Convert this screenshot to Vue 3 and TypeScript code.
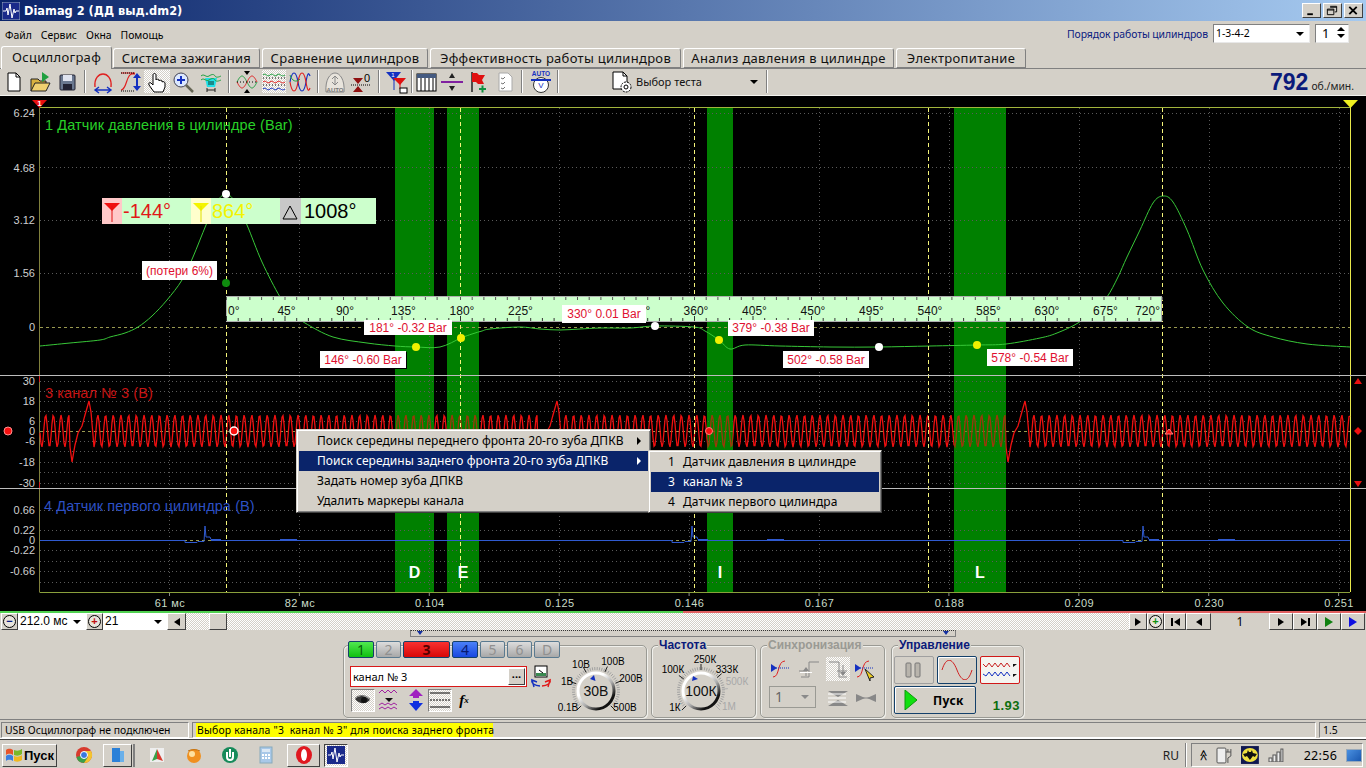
<template>
  <div class="app">
    <header class="title-bar">
      <svg class="app-icon" viewBox="0 0 18 18"><rect width="18" height="18" fill="#1a2a8a" stroke="#9ab" /><path d="M1 9h3l1-3 1 7 2-11 2 14 2-9 1 4 1-2h3" fill="none" stroke="#fff" /></svg>
      <span class="title-text">Diamag 2 (ДД выд.dm2)</span>
      <div class="win-btns">
        <button class="win-btn"><svg viewBox="0 0 16 14"><rect x="4" y="10" width="6" height="2" /></svg></button>
        <button class="win-btn"><svg viewBox="0 0 16 14"><path d="M6 2.5h7v6h-2M3 5.5h7v6H3z M3 6.5h7M6 3.5h7" fill="none" stroke="#000" /></svg></button>
        <button class="win-btn"><svg viewBox="0 0 16 14"><path d="M4 3l8 8M12 3l-8 8" stroke="#000" stroke-width="2" /></svg></button>
      </div>
    </header>

    <div class="menu-row">
      <nav class="menu-bar">
        <span v-for="m in menus" :key="m">{{ m }}</span>
      </nav>
      <span class="order-label">Порядок работы цилиндров</span>
      <div class="combo order-combo">1-3-4-2<i class="arr"></i></div>
      <div class="combo spin">1<span class="spin-arrows"><i class="up"></i><i class="arr"></i></span></div>
    </div>

    <div class="tabs">
      <div v-for="t in tabs" :key="t.name" class="tab" :class="{ active: t.active }" :style="{ width: t.w + 'px' }">{{ t.name }}</div>
    </div>

    <div class="toolbar">
      <template v-for="(it, i) in toolbar" :key="i">
        <span v-if="it.sep" class="tb-sep" :style="{ width: it.w + 'px' }"></span>
        <span v-else class="tb-btn" :class="{ pressed: it.on }" :style="{ width: it.w + 'px' }">
          <svg viewBox="0 0 24 24" width="24" height="24" v-html="it.svg"></svg>
        </span>
      </template>
      <div class="test-select">
        <svg viewBox="0 0 24 24" width="24" height="24"><path d="M3 2h10l4 4v13H3z" fill="#fff" stroke="#000" /><path d="M13 2v4h4" fill="none" stroke="#000" /><circle cx="16" cy="17" r="5" fill="#fff" stroke="#000" stroke-dasharray="2 1" /><circle cx="16" cy="17" r="2" fill="none" stroke="#000" /></svg>
        <span>Выбор теста</span>
        <i class="arr"></i>
      </div>
      <span class="tb-sep" style="width: 2px"></span>
      <div class="rpm"><b>792</b><span>об./мин.</span></div>
    </div>

    <main class="scope">
      <svg class="plot" viewBox="0 96 1366 517" width="1366" height="517">
        <rect x="0" y="96" width="1366" height="517" fill="#000" />
        <rect v-for="b in bands" :key="b.l" :x="b.x" y="107" :width="b.w" height="485" fill="#008000" />

        <line v-for="y in gridY" :key="'h' + y" x1="40" x2="1350" :y1="y" :y2="y" stroke="#5a5a5a" stroke-dasharray="1 3" />
        <line v-for="x in gridX" :key="'v' + x" :x1="x" :x2="x" y1="108" y2="592" stroke="#5a5a5a" stroke-dasharray="1 3" />
        <line v-for="y in zeroY" :key="'z' + y" x1="40" x2="1350" :y1="y" :y2="y" stroke="#9a9a50" stroke-dasharray="3 3" />

        <line x1="39.5" x2="1350" y1="107.5" y2="107.5" stroke="#a3b53c" />
        <line x1="39.5" x2="39.5" y1="107" y2="592" stroke="#80803c" />
        <line x1="39.5" x2="1350" y1="592.5" y2="592.5" stroke="#8aa03c" />
        <line x1="39.5" x2="39.5" y1="376" y2="382" stroke="#d02020" />
        <line x1="39.5" x2="39.5" y1="482" y2="488" stroke="#d02020" />
        <line x1="1350.5" x2="1350.5" y1="107" y2="592" stroke="#e8e84a" />

        <path :d="ch3Path" fill="none" stroke="#f01010" stroke-width="1.3" />
        <rect v-for="b in bands" :key="'d' + b.l" :x="b.x" y="408" :width="b.w" height="50" fill="#008000" opacity="0.35" />
        <path :d="ch4Path" fill="none" stroke="#2f5ad0" />
        <path :d="ch4Thick" fill="none" stroke="#2f5ad0" stroke-width="2" />
        <path :d="ch1Path" fill="none" stroke="#38c838" />

        <line v-for="x in cursors" :key="'c' + x" :x1="x" :x2="x" y1="108" y2="592" stroke="#f4f47a" stroke-dasharray="4 3" />

        <line x1="0" x2="1366" y1="375.5" y2="375.5" stroke="#bdbdbd" />
        <line x1="0" x2="1366" y1="488.5" y2="488.5" stroke="#bdbdbd" />

        <text v-for="a in axisY" :key="a.t + a.y" class="axis-text" x="35" :y="a.y + 4" text-anchor="end">{{ a.t }}</text>
        <text v-for="a in axisX" :key="a.t" class="axis-x" :x="a.x" y="607" text-anchor="middle">{{ a.t }}</text>
        <line v-for="a in axisX" :key="'t' + a.t" :x1="a.x - 0.5" :x2="a.x - 0.5" y1="593" y2="596" stroke="#888" />
        <text v-for="b in bands" :key="'t' + b.l" class="band-letter" :x="b.x + b.w / 2" y="578" text-anchor="middle">{{ b.l }}</text>

        <text class="ch-name" x="45" y="130" fill="#28d028">1 Датчик давления в цилиндре (Bar)</text>
        <text class="ch-name" x="45" y="398" fill="#c81414">3 канал № 3 (В)</text>
        <text class="ch-name" x="44" y="511" fill="#2d50c4">4 Датчик первого цилиндра (В)</text>

        <rect x="226.5" y="296.5" width="935" height="25" fill="#ccffcc" stroke="#b0b0b0" />
        <line v-for="t in rulerTicks" :key="'r' + t.x" :x1="t.x" :x2="t.x" y1="297" y2="300" stroke="#555" />
        <line v-for="t in rulerTicks" :key="'b' + t.x" :x1="t.x" :x2="t.x" :y1="t.major ? 316 : 318" y2="321" stroke="#333" />
        <text v-for="r in rulerLabels" :key="r.t" class="ruler-text" :x="r.x" y="315" :text-anchor="r.anchor">{{ r.t }}</text>

        <circle v-for="d in dots" :key="d.x" :cx="d.x" :cy="d.y" r="4" :fill="d.c" />

        <path d="M32 100h15l-7.500 8z" fill="#e81010" />
        <text class="marker-no" x="39.500" y="106" text-anchor="middle">1</text>
        <path d="M1343 100h15l-7.500 8z" fill="#f0f020" />

        <circle cx="8" cy="431" r="4" fill="#f81010" stroke="#ff9090" />
        <circle cx="234" cy="431" r="4" fill="#f81010" stroke="#fff" stroke-width="1.500" />
        <circle cx="709" cy="431" r="3.500" fill="#f81010" stroke="#ff8080" />
        <path d="M1165 434l4-5 4 5z" fill="#f81010" stroke="#ff8080" />
        <path d="M1354 384l4-6 4 6z" fill="#e81010" />
        <path d="M1358 427l4 4-4 4-4-4z" fill="#f01010" />
        <path d="M1354 481h8l-4 6z" fill="#e81010" />
      </svg>

      <div class="readout">
        <span class="ro-flag red"><svg viewBox="0 0 20 26" width="20" height="26"><path d="M2 5h16l-8 8z" fill="#f01010" /><line x1="10" x2="10" y1="8" y2="24" stroke="#e01010" /></svg></span>
        <span class="ro-val red">-144°</span>
        <span class="ro-flag yellow"><svg viewBox="0 0 20 26" width="20" height="26"><path d="M2 5h16l-8 8z" fill="#f4f400" /><line x1="10" x2="10" y1="8" y2="24" stroke="#e0e000" /></svg></span>
        <span class="ro-val yellow">864°</span>
        <span class="ro-flag gray"><svg viewBox="0 0 20 26" width="20" height="26"><path d="M3 21h14L10 8z" fill="none" stroke="#000" /></svg></span>
        <span class="ro-val last">1008°</span>
      </div>

      <div
        v-for="l in labels"
        :key="l.t"
        class="val-label"
        :class="{ shadow: l.shadow }"
        :style="{ left: l.x + 'px', top: l.y - 96 + 'px', width: l.w + 'px', height: l.h + 'px' }"
      >{{ l.t }}</div>

      <ul class="ctx-menu">
        <li v-for="m in ctxItems" :key="m.t" :class="{ sel: m.sel }">{{ m.t }}<i v-if="m.sub" class="sub-arr"></i></li>
      </ul>
      <ul class="ctx-menu sub">
        <li v-for="m in subItems" :key="m.n" :class="{ sel: m.sel }"><span class="sub-n">{{ m.n }}</span>{{ m.t }}</li>
      </ul>
    </main>

    <div class="nav-row">
      <button class="rnd-btn"><span class="rnd">−</span></button>
      <div class="nav-combo w68">212.0 мс<i class="arr"></i></div>
      <button class="rnd-btn"><span class="rnd plus-red">+</span></button>
      <div class="nav-combo w64">21<i class="arr"></i></div>
      <button class="nav-btn w19"><i class="tri-l"></i></button>
      <div class="track"><span class="thumb"></span></div>
      <button class="nav-btn w18"><i class="tri-r"></i></button>
      <button class="rnd-btn"><span class="rnd plus-green">+</span></button>
      <button class="nav-btn w22"><i class="bar"></i><i class="tri-l"></i></button>
      <button class="nav-btn w25"><i class="tri-l"></i></button>
      <span class="page-no">1</span>
      <button class="nav-btn w24"><i class="tri-r"></i></button>
      <button class="nav-btn w24"><i class="tri-r"></i><i class="bar"></i></button>
      <button class="nav-btn w24"><i class="tri-r green"></i></button>
      <button class="nav-btn w24"><i class="tri-r blue"></i></button>
    </div>

    <div class="slider-row">
      <div class="slider"><i class="s-mark"></i><i class="s-mark"></i></div>
    </div>

    <section class="controls">
      <div class="group g-channels">
        <div class="g-left">
          <div class="ch-btns">
            <span v-for="c in channels" :key="c.t" class="ch-btn" :class="c.cls" :style="{ width: c.w + 'px' }">{{ c.t }}</span>
          </div>
          <div class="ch-input-row">
            <div class="ch-input">канал № 3<span class="dots-btn">...</span></div>
            <svg viewBox="0 0 20 24" width="20" height="24"><rect x="4" y="1" width="12" height="11" fill="#fff" stroke="#000" /><rect x="5" y="8" width="10" height="3" fill="#3a8a50" /><path d="M8 5l4 3" stroke="#000" /><path d="M1 15a9 5 0 0 0 8 6M3 22l-2-7 5 2" fill="none" stroke="#1430c0" stroke-width="1.400" /><path d="M19 15a9 5 0 0 1-8 6M17 22l2-7-5 2" fill="none" stroke="#e01818" stroke-width="1.400" /></svg>
          </div>
          <div class="ch-tools">
            <span class="tool pressed w24"><svg viewBox="0 0 22 22" width="22" height="22"><path d="M3 10c4-4 10-4 15 1-4 4-10 5-15-1z" fill="#333" /><circle cx="12" cy="11" r="3" fill="#111" /><path d="M3 9c5-4 11-3 15 1" fill="none" stroke="#777" /></svg></span>
            <span class="tool w28"><svg viewBox="0 0 22 22" width="22" height="22"><path d="M1 4l3-3 3 3 3-3 3 3 3-3 3 3" fill="none" stroke="#a020a0" /><path d="M7 9h8l-4 4z" fill="#111" /><path d="M1 16l3-2 3 2 3-2 3 2 3-2 3 2M1 20l3-2 3 2 3-2 3 2 3-2 3 2" fill="none" stroke="#a020a0" /></svg></span>
            <span class="tool w25"><svg viewBox="0 0 22 22" width="22" height="22"><path d="M11 0l7 7h-4v2H8V7H4z" fill="#a020c0" /><path d="M11 22l7-8h-4v-2H8v2H4z" fill="#1030e0" /></svg></span>
            <span class="tool pressed w24"><svg viewBox="0 0 22 22" width="22" height="22"><path d="M1 4h20M1 18h20" stroke="#000" /><path d="M1 11h20" stroke="#000" stroke-dasharray="2 1" /></svg></span>
            <span class="tool w24 fx">f<sub>x</sub></span>
          </div>
        </div>
        <svg class="knob-svg" viewBox="558 646 88 71" width="88" height="71">
          <g v-for="k in [knobs[0]]" :key="k.c">
            <line v-for="(t, i) in k.ticks" :key="i" :x1="t.x1" :y1="t.y1" :x2="t.x2" :y2="t.y2" :stroke="t.c" />
            <circle :cx="k.x" :cy="k.y" r="18" fill="#d4d0c8" stroke="url(#ring)" stroke-width="3" />
            <path :d="`M${k.x - 6} ${k.y - 12}l4 -4l1.500 6z`" fill="#1430c0" />
            <text class="knob-c" :x="k.x" :y="k.y + 5" text-anchor="middle">{{ k.c }}</text>
            <text v-for="l in k.labels" :key="l.t" class="knob-l" :x="l.x" :y="l.y + 3" text-anchor="middle" :fill="l.off ? '#a8a8a8' : '#000'">{{ l.t }}</text>
          </g>
          <defs>
            <linearGradient id="ring" x1="0.150" y1="0.100" x2="0.850" y2="0.900"><stop offset="0.300" stop-color="#fff" /><stop offset="0.600" stop-color="#aaa" /><stop offset="0.900" stop-color="#111" /></linearGradient>
          </defs>
        </svg>
      </div>

      <div class="group g-freq">
        <span class="g-title">Частота</span>
        <svg class="knob-svg" viewBox="652 646 102 71" width="102" height="71">
          <g v-for="k in [knobs[1]]" :key="k.c">
            <line v-for="(t, i) in k.ticks" :key="i" :x1="t.x1" :y1="t.y1" :x2="t.x2" :y2="t.y2" :stroke="t.c" />
            <circle :cx="k.x" :cy="k.y" r="18" fill="#d4d0c8" stroke="url(#ring)" stroke-width="3" />
            <path :d="`M${k.x - 9} ${k.y - 10}l1 -5l5 3z`" fill="#1430c0" />
            <text class="knob-c" :x="k.x" :y="k.y + 5" text-anchor="middle">{{ k.c }}</text>
            <text v-for="l in k.labels" :key="l.t" class="knob-l" :x="l.x" :y="l.y + 3" text-anchor="middle" :fill="l.off ? '#a8a8a8' : '#000'">{{ l.t }}</text>
          </g>
        </svg>
      </div>

      <div class="group g-sync">
        <span class="g-title off">Синхронизация</span>
        <div class="sync-grid">
          <span class="sync-cell"><svg viewBox="0 0 24 24" width="24" height="24"><path d="M3 20c7 0 4-16 12-16" fill="none" stroke="#e02020" /><path d="M6 11h14" stroke="#1430c0" stroke-dasharray="1 1" /><path d="M1 7l6 4-6 4z" fill="#1430c0" /></svg></span>
          <span class="sync-cell"><svg viewBox="0 0 24 24" width="24" height="24"><path d="M3 20h8V5h10M1 14h6" fill="none" stroke="#888" /><path d="M8 10l-3 4h6z" fill="#888" /><path d="M8 14v5" stroke="#888" /><path d="M2 15.500h12" stroke="#fff" /></svg></span>
          <span class="sync-cell pressed"><svg viewBox="0 0 24 24" width="24" height="24"><path d="M3 5h10v15h8M11 14h10" fill="none" stroke="#888" /><path d="M17 19l-3-4h6z" fill="#888" /><path d="M17 8v7" stroke="#888" /></svg></span>
          <span class="sync-cell"><svg viewBox="0 0 24 24" width="24" height="24"><path d="M3 20c7 0 4-16 12-16" fill="none" stroke="#e02020" /><path d="M6 11h14" stroke="#1430c0" stroke-dasharray="1 1" /><path d="M1 7l6 4-6 4z" fill="#1430c0" /><path d="M11 12l9 8-4 1 0 3z" fill="#f0d020" stroke="#222" /></svg></span>
          <div class="sync-combo">1<i class="arr off"></i></div>
          <span class="sync-cell"><svg viewBox="0 0 24 24" width="24" height="24"><path d="M2 5h20l-10 6zM2 20h20L12 14z" fill="#888" /><path d="M2 8h18M2 12h18M2 16h18" stroke="#fff" /></svg></span>
          <span class="sync-cell"><svg viewBox="0 0 24 24" width="24" height="24"><path d="M2 8l9 4-9 4zM22 8l-9 4 9 4z" fill="#888" /><path d="M2 12h20" stroke="#888" /></svg></span>
        </div>
      </div>

      <div class="group g-run">
        <span class="g-title">Управление</span>
        <div class="run-top">
          <button class="run-btn"><svg viewBox="0 0 22 20" width="22" height="20"><rect x="3" y="3" width="5" height="14" rx="1" fill="#b8b4ac" stroke="#777" /><rect x="12" y="3" width="5" height="14" rx="1" fill="#b8b4ac" stroke="#777" /></svg></button>
          <button class="run-btn navy"><svg viewBox="0 0 34 20" width="34" height="20"><path d="M2 10C6 -3 12 -3 17 10s11 13 15 0" fill="none" stroke="#d02020" /></svg></button>
          <button class="run-btn red-b"><svg viewBox="0 0 36 22" width="36" height="22"><path d="M1 5l3 3 3-4 3 4 3-4 3 4 3-4 3 4 3-4 3 4" fill="none" stroke="#c82020" /><path d="M31 5h4l-4 3z" fill="#111" /><path d="M1 15l3 2 3-4 3 4 3-4 3 4 3-4 3 4 3-4 3 4" fill="none" stroke="#1430c0" /><path d="M31 15h4l-4 3z" fill="#111" /></svg></button>
        </div>
        <div class="run-bottom">
          <button class="start-btn"><svg viewBox="0 0 14 20" width="14" height="20"><path d="M1 0l12 10L1 20z" fill="#10e010" stroke="#0a9a0a" /></svg><b>Пуск</b></button>
          <span class="ver">1.93</span>
        </div>
      </div>
    </section>

    <footer class="status-bar">
      <div class="st-panel st-usb">USB Осциллограф не подключен</div>
      <div class="st-panel st-msg"><span class="st-yellow">{{ statusMsg }}</span></div>
      <div class="st-panel st-ver">1.5</div>
    </footer>

    <div class="taskbar">
      <button class="start"><svg viewBox="0 0 18 16" width="18" height="16"><path d="M1 3c3-2 5-1 7 0v5C6 7 4 6 1 8z" fill="#e8542a" /><path d="M9 3c3 1 5 1 8-1v5c-3 2-5 2-8 1z" fill="#7ab828" /><path d="M1 9c3-2 5-1 7 0v5c-2-1-4-2-7 0z" fill="#3a7ee0" /><path d="M9 9c3 1 5 1 8-1v5c-3 2-5 2-8 1z" fill="#f0b820" /></svg>Пуск</button>
      <span class="tk-ic" style="margin-left: 18px"><svg viewBox="0 0 18 18" width="18" height="18"><circle cx="9" cy="9" r="8" fill="#d83a2e" /><path d="M9 9L1.500 11A8 8 0 0 0 9 17l4-5z" fill="#3aa04a" /><path d="M9 5h7a8 8 0 0 1-7 12l4-6z" fill="#f4c430" /><circle cx="9" cy="9" r="3.500" fill="#3878e0" stroke="#fff" /></svg></span>
      <span class="tk-btn w29"><svg viewBox="0 0 18 18" width="18" height="18"><path d="M3 2h8v14H3z" fill="#2a80d8" /><path d="M11 5h4v11h-4z" fill="#6ab0ea" /></svg></span>
      <span class="tk-sep"></span>
      <span class="tk-ic" style="margin-left: 13px"><svg viewBox="0 0 18 18" width="18" height="18"><path d="M2 2h14v14H2z" fill="#eee" /><path d="M9 3L4 15l5-2z" fill="#3aa04a" /><path d="M9 3l6 12-6-2z" fill="#d83a2e" /></svg></span>
      <span class="tk-ic" style="margin-left: 19px"><svg viewBox="0 0 18 18" width="18" height="18"><circle cx="9" cy="10" r="7" fill="#f09020" /><circle cx="7" cy="8" r="3" fill="#fde0a0" /><path d="M3 5a8 4 0 0 1 12 0" fill="none" stroke="#c07010" /></svg></span>
      <span class="tk-ic" style="margin-left: 18px"><svg viewBox="0 0 18 18" width="18" height="18"><circle cx="9" cy="9" r="8" fill="#168a5a" /><path d="M5 6v5a4 4 0 0 0 8 0V6h-2v5a2 2 0 0 1-4 0V6z" fill="#fff" /><path d="M9 3v8" stroke="#fff" stroke-width="2" /></svg></span>
      <span class="tk-ic" style="margin-left: 18px"><svg viewBox="0 0 18 18" width="18" height="18"><rect x="3" y="1" width="12" height="16" fill="#a8c8e8" stroke="#8ab" /><rect x="5" y="3" width="8" height="3" fill="#dbe8f4" /><path d="M5 9h2M8 9h2M11 9h2M5 12h2M8 12h2M11 12h2" stroke="#fff" stroke-width="2" /></svg></span>
      <span class="tk-btn w33" style="margin-left: 12px"><svg viewBox="0 0 18 18" width="18" height="18"><ellipse cx="9" cy="9" rx="8" ry="9" fill="#e01820" /><ellipse cx="9" cy="9" rx="3" ry="6" fill="#fff" /></svg></span>
      <span class="tk-btn tk-active w24"><svg viewBox="0 0 18 18" width="18" height="18"><rect width="18" height="18" fill="#1a2a8a" /><path d="M1 9h3l1-3 1 7 2-11 2 14 2-9 1 4 1-2h3" fill="none" stroke="#fff" /></svg></span>
      <span class="tk-lang">RU</span>
      <span class="tk-div"></span>
      <div class="tray">
        <span class="tray-up">≫</span>
        <svg viewBox="0 0 20 20" width="20" height="20"><rect x="2" y="3" width="9" height="15" rx="1" fill="#eee" stroke="#555" /><path d="M11 7h5v4l-3 2v5M13 4v3M16 4v3" fill="none" stroke="#555" /></svg>
        <svg viewBox="0 0 18 18" width="18" height="18"><rect width="18" height="18" fill="#101850" /><ellipse cx="9" cy="9" rx="8" ry="7" fill="#f0e040" /><path d="M2 8l4-1 1-3 1 2h2l1-2 1 3 4 1-2 3-2-1-3 4-3-4-2 1z" fill="#111" /></svg>
        <svg class="tray-sig" viewBox="0 0 16 14" width="16" height="14"><rect x="1" y="10" width="3" height="4" fill="#eee" stroke="#555" /><rect x="5" y="7" width="3" height="7" fill="#eee" stroke="#555" /><rect x="9" y="4" width="3" height="10" fill="#eee" stroke="#555" /><rect x="13" y="1" width="2" height="13" fill="#eee" stroke="#555" /></svg>
        <span class="clock">22:56</span>
        <span class="desk"></span>
      </div>
    </div>
  </div>
</template>

<script setup lang="ts">
type Pt = [number, number]

const menus = ['Файл', 'Сервис', 'Окна', 'Помощь']
const statusMsg = 'Выбор канала "3  канал № 3" для поиска заднего фронта'

const tabs = [
  { name: 'Осциллограф', w: 111, active: true },
  { name: 'Система зажигания', w: 147 },
  { name: 'Сравнение цилиндров', w: 166 },
  { name: 'Эффективность работы цилиндров', w: 251 },
  { name: 'Анализ давления в цилиндре', w: 211 },
  { name: 'Электропитание', w: 130 },
]

const toolbar = [
  { w: 26, svg: '<path d="M6 3h8l4 4v14H6z" fill="#fff" stroke="#000"/><path d="M14 3v4h4" fill="none" stroke="#000"/>' },
  { w: 26, svg: '<path d="M3 21V9h7l2 2h6v2" fill="#d8b040" stroke="#222"/><path d="M3 21l4-8h15l-4 8z" fill="#f0d070" stroke="#222"/><path d="M14 2l7 5-7 5z" fill="#20a040"/>' },
  { w: 28, svg: '<rect x="5" y="5" width="15" height="15" rx="1" fill="#6a7890" stroke="#223"/><rect x="8" y="5" width="9" height="6" fill="#e0e4f0"/><rect x="8" y="14" width="9" height="6" fill="#223"/>' },
  { w: 8, sep: true },
  { w: 28, svg: '<path d="M4 17C3 8 8 4 12 4s9 4 8 13" fill="none" stroke="#e02020" stroke-width="1.400"/><path d="M4 20h16M8 17l-4 3 4 3M16 17l4 3-4 3" fill="none" stroke="#1430c0" stroke-width="1.400"/>' },
  { w: 27, svg: '<path d="M2 20c6 0 5-16 11-16h3M2 3h14" fill="none" stroke="#e02020" stroke-width="1.200"/><path d="M2 3h14M2 21h14" stroke="#000" stroke-dasharray="1 1"/><path d="M18 5v14" stroke="#1430c0" stroke-width="2"/><path d="M14 8l4-5 4 5zM14 16l4 5 4-5z" fill="#1430c0"/>' },
  { w: 26, on: true, svg: '<path d="M9 22l-5-7c-1-2 1-3 2-2l2 2V5c0-2 3-2 3 0v5c0-1 3-1 3 0v1c0-1 3-1 3 0v1c1-1 3 0 3 1v4l-2 5z" fill="#fff" stroke="#000"/>' },
  { w: 26, svg: '<circle cx="10" cy="10" r="7" fill="#dce8ff" stroke="#445"/><path d="M10 6v8M6 10h8" stroke="#1430c0" stroke-width="2"/><path d="M15 15l7 7" stroke="#665" stroke-width="2.500"/>' },
  { w: 30, svg: '<path d="M6 8h12l-2 9H8z" fill="#20e0e8"/><path d="M2 6c3-3 5 2 8 0s5-2 6 0 4 1 6 0M2 10c3-3 5 2 8 0s5-2 6 0 4 1 6 0" fill="none" stroke="#20a040"/><path d="M8 20h8M8 18v4M16 18v4" stroke="#222"/><rect x="9" y="11" width="6" height="4" fill="#1a8a8a"/>' },
  { w: 6, sep: true },
  { w: 30, svg: '<path d="M2 12c4-8 6-8 10 0s6 8 10 0" fill="none" stroke="#20a040"/><path d="M2 12c4 8 6 8 10 0s6-8 10 0" fill="none" stroke="#e02020"/><path d="M2 12h20" stroke="#000" stroke-dasharray="1 2"/><path d="M9 1h6l-3 4zM9 23h6l-3-4z" fill="#000"/>' },
  { w: 24, on: true, svg: '<path d="M1 5c3-3 4 3 7 0s4 3 7 0 4 3 8 0" fill="none" stroke="#20a040"/><path d="M1 12c3-3 4 3 7 0s4 3 7 0 4 3 8 0" fill="none" stroke="#e02020"/><path d="M1 19c3-3 4 3 7 0s4 3 7 0 4 3 8 0" fill="none" stroke="#1430c0"/><path d="M1 8h22M1 15h22" stroke="#000" stroke-dasharray="1 2"/>' },
  { w: 28, svg: '<path d="M2 12c2-12 6-12 8 0s6 12 8 0 3-8 4-6" fill="none" stroke="#1430c0" stroke-width="1.200"/><path d="M2 12c2 12 6 12 8 0s6-12 8 0 3 8 4 6" fill="none" stroke="#e02020" stroke-width="1.200"/><path d="M2 5c2 6 6 8 10 4" fill="none" stroke="#20a040"/>' },
  { w: 8, sep: true },
  { w: 25, svg: '<path d="M3 22C2 10 7 3 12 3s10 7 9 19z" fill="#e8e4dc" stroke="#888"/><path d="M12 6v9M9 9l3-3 3 3M9 12l3 3 3-3" fill="none" stroke="#888"/><text x="12" y="22" font-size="6" font-family="Liberation Sans" font-weight="700" fill="#777" text-anchor="middle">AUTO</text>' },
  { w: 28, svg: '<path d="M4 8h10l-5 6zM4 22h10l-5-6z" fill="#901010"/><path d="M2 15h20" stroke="#000" stroke-dasharray="1 1"/><text x="18" y="12" font-size="11" font-family="Liberation Sans" fill="#000" text-anchor="middle">0</text>' },
  { w: 8, sep: true },
  { w: 28, svg: '<path d="M1 2h15l-7 9z" fill="#1430c0"/><path d="M9 3v17" stroke="#1430c0"/><path d="M8 8h13l-6 7z" fill="#e01010"/><path d="M15 11v8" stroke="#e01010"/><rect x="15" y="18" width="7" height="5" fill="#fff" stroke="#000"/><text x="8" y="7" font-size="6" font-family="Liberation Sans" fill="#fff" text-anchor="middle">1</text>' },
  { w: 2, sep: true },
  { w: 26, svg: '<rect x="3" y="4" width="19" height="17" fill="#fff" stroke="#000"/><rect x="3" y="4" width="19" height="4" fill="#445a80"/><path d="M7 8v13M11 8v13M15 8v13M19 8v13" stroke="#000"/>' },
  { w: 26, svg: '<path d="M1 12h22" stroke="#8020a0" stroke-width="2"/><path d="M9 8h6l-3-5zM9 16h6l-3 5z" fill="#222"/>' },
  { w: 26, svg: '<path d="M6 2v20" stroke="#222" stroke-width="1.500"/><path d="M6 3h5l2 2h6l-3 5 2 4h-6l-2-2H6z" fill="#e01010"/><path d="M13 19h7M16.500 15.500v7" stroke="#109040" stroke-width="2"/>' },
  { w: 28, svg: '<path d="M6 3h9l4 4v14H6z" fill="#fff" stroke="#aaa"/><path d="M8 8l2 1 2-2M8 13l2 1 2-2M8 18l2 1 2-2" fill="none" stroke="#777"/>' },
  { w: 6, sep: true },
  { w: 32, svg: '<text x="12" y="6" font-size="6.500" font-family="Liberation Sans" font-weight="700" fill="#1430c0" text-anchor="middle">AUTO</text><circle cx="12" cy="15" r="7.500" fill="#fff" stroke="#333"/><text x="12" y="18" font-size="8" font-family="Liberation Sans" fill="#1430c0" text-anchor="middle">V</text><path d="M2 10h20" stroke="#1430c0" stroke-width="2"/>' },
  { w: 2, sep: true },
]

const bands = [
  { l: 'D', x: 395, w: 39 },
  { l: 'E', x: 447, w: 32 },
  { l: 'I', x: 707, w: 26 },
  { l: 'L', x: 954, w: 52 },
]

const gridY = [113.5, 167.5, 220.5, 273.5, 381.5, 391.5, 401.5, 411.5, 421.5, 441.5, 451.5, 462.5, 472.5, 483.5, 510.5, 530.5, 550.5, 561.5, 571.5, 582.5]
const zeroY = [327.5, 431.5, 540.5]
const gridX = Array.from({ length: 10 }, (_, i) => 169.5 + i * 130)
const cursors = [226.5, 460.5, 694.5, 928.5, 1162.5]

const axisY = [
  { t: '6.24', y: 113 }, { t: '4.68', y: 168 }, { t: '3.12', y: 220 }, { t: '1.56', y: 273 }, { t: '0', y: 327 },
  { t: '30', y: 381 }, { t: '18', y: 401 }, { t: '6', y: 421 }, { t: '0', y: 431 }, { t: '-6', y: 441 }, { t: '-18', y: 462 }, { t: '-30', y: 483 },
  { t: '0.66', y: 510 }, { t: '0.22', y: 530 }, { t: '0', y: 540 }, { t: '-0.22', y: 550 }, { t: '-0.66', y: 571 },
]

const axisX = ['61 мс', '82 мс', '0.104', '0.125', '0.146', '0.167', '0.188', '0.209', '0.230', '0.251'].map((t, i) => ({ t, x: 170 + i * 129.9 }))

const ch1Pts: Pt[] = [
  [40, 346], [70, 343], [100, 340], [110, 337], [125, 333], [138, 327], [152, 316], [167, 300], [182, 280], [193, 257], [206, 225], [216, 203], [226, 194],
  [236, 203], [247, 225], [262, 262], [280, 297], [292, 313], [305, 323], [333, 337], [367, 343], [395, 346], [416, 347], [440, 347], [461, 338],
  [472, 334], [482, 331], [490, 329], [520, 327], [540, 329], [560, 330], [580, 329], [600, 328], [630, 328], [655, 326], [694, 327], [705, 331],
  [719, 340], [730, 349], [745, 345], [780, 346], [830, 347], [879, 347], [930, 346], [977, 345], [1006, 344], [1040, 338], [1057, 333], [1078, 323],
  [1095, 309], [1107, 297], [1118, 277], [1127, 257], [1140, 230], [1153, 203], [1163, 196], [1173, 202], [1187, 230], [1203, 270], [1223, 303], [1248, 327], [1273, 337], [1307, 344], [1350, 347],
]

function smooth(pts: Pt[]): string {
  let d = `M${pts[0][0]} ${pts[0][1]}`
  for (let i = 0; i < pts.length - 1; i++) {
    const p0 = pts[Math.max(i - 1, 0)]
    const p1 = pts[i]
    const p2 = pts[i + 1]
    const p3 = pts[Math.min(i + 2, pts.length - 1)]
    const c1x = p1[0] + (p2[0] - p0[0]) / 6
    const c1y = p1[1] + (p2[1] - p0[1]) / 6
    const c2x = p2[0] - (p3[0] - p1[0]) / 6
    const c2y = p2[1] - (p3[1] - p1[1]) / 6
    d += `C${c1x.toFixed(1)} ${c1y.toFixed(1)} ${c2x.toFixed(1)} ${c2y.toFixed(1)} ${p2[0]} ${p2[1]}`
  }
  return d
}

const ch1Path = smooth(ch1Pts)

// compression event every 468 px, ignition-like ripple between them
const eventShape: Pt[] = [[-19, 447], [-17, 462], [-14, 445], [-11, 433], [-7, 426], [-4, 415], [0, 401], [2, 412], [5, 447]]

function ch3At(x: number): number {
  const cyc = (((x - 89) % 468) + 468) % 468
  const e = cyc > 440 ? cyc - 468 : cyc
  if (e >= -19 && e <= 5) {
    for (let i = 0; i < eventShape.length - 1; i++) {
      const a = eventShape[i]
      const b = eventShape[i + 1]
      if (e <= b[0]) return a[1] + ((b[1] - a[1]) * (e - a[0])) / (b[0] - a[0])
    }
  }
  const t = cyc - 5
  return 431 + 16 * Math.cos((2 * Math.PI * t) / 7.7)
}

const ch3Pts: string[] = []
for (let x = 40; x <= 1350; x++) ch3Pts.push(`${x} ${ch3At(x).toFixed(1)}`)
const ch3Path = 'M' + ch3Pts.join('L')

const ch4Spikes = [205, 692, 1143]

const ch4Path = (() => {
  let d = 'M40 540.500'
  for (const s of ch4Spikes) {
    d += `L${s - 20} 540.500L${s - 20} 542.500L${s - 8} 542.500L${s - 7} 541.500L${s - 1} 541.500L${s} 526L${s + 1} 537L${s + 5} 537L${s + 6} 539.500L${s + 15} 540.500`
  }
  return d + 'L1350 540.500'
})()

const ch4Thick = ch4Spikes.map((s) => `M${s + 6} 540H${s + 16}M${s + 75} 540H${s + 92}`).join('')

const rulerTicks = Array.from({ length: 81 }, (_, i) => ({ x: 226.5 + i * 11.7, major: i % 5 === 0 }))
// 270 and 315 sit under the "330°" readout, only the degree sign of 315 sticks out
const rulerLabels = Array.from({ length: 17 }, (_, i) => {
  const deg = i * 45
  let x = 228 + i * 58.5
  let anchor = 'middle'
  let t = deg + '°'
  if (i === 0) { x = 228; anchor = 'start' }
  if (i === 16) { x = 1160; anchor = 'end' }
  if (deg === 315) { x = 648; t = '°' }
  return { t, x, anchor, deg }
}).filter((r) => r.deg !== 270)

const dots = [
  { x: 226, y: 194, c: '#fff' },
  { x: 226, y: 283, c: '#0e8a0e' },
  { x: 416, y: 347, c: '#f0f000' },
  { x: 461, y: 338, c: '#f0f000' },
  { x: 655, y: 326, c: '#fff' },
  { x: 719, y: 340, c: '#f0f000' },
  { x: 879, y: 347, c: '#fff' },
  { x: 977, y: 345, c: '#f0f000' },
]

const labels = [
  { t: '(потери 6%)', x: 142, y: 261, w: 75, h: 19 },
  { t: '181° -0.32 Bar', x: 364, y: 320, w: 88, h: 15 },
  { t: '146° -0.60 Bar', x: 320, y: 351, w: 86, h: 17, shadow: true },
  { t: '330° 0.01 Bar', x: 562, y: 305, w: 84, h: 18 },
  { t: '379° -0.38 Bar', x: 728, y: 320, w: 86, h: 16 },
  { t: '502° -0.58 Bar', x: 783, y: 351, w: 86, h: 17, shadow: true },
  { t: '578° -0.54 Bar', x: 987, y: 349, w: 86, h: 17 },
]

const ctxItems = [
  { t: 'Поиск середины переднего фронта 20-го зуба ДПКВ', sub: true },
  { t: 'Поиск середины заднего фронта 20-го зуба ДПКВ', sub: true, sel: true },
  { t: 'Задать номер зуба ДПКВ' },
  { t: 'Удалить маркеры канала' },
]
const subItems = [
  { n: '1', t: 'Датчик давления в цилиндре' },
  { n: '3', t: 'канал № 3', sel: true },
  { n: '4', t: 'Датчик первого цилиндра' },
]

const channels = [
  { t: '1', w: 26, cls: 'c-green' },
  { t: '2', w: 25, cls: 'c-gray' },
  { t: '3', w: 47, cls: 'c-red' },
  { t: '4', w: 26, cls: 'c-blue' },
  { t: '5', w: 25, cls: 'c-gray' },
  { t: '6', w: 25, cls: 'c-gray' },
  { t: 'D', w: 26, cls: 'c-gray' },
]

function makeKnob(x: number, y: number, c: string, majors: { a: number; off?: boolean }[], labels: { t: string; x: number; y: number; off?: boolean }[]) {
  const ticks: { x1: number; y1: number; x2: number; y2: number; c: string }[] = []
  const rad = (a: number) => ((a - 90) * Math.PI) / 180
  for (let a = -135; a <= 135; a += 6) {
    const r = rad(a)
    ticks.push({ x1: x + Math.cos(r) * 21, y1: y + Math.sin(r) * 21, x2: x + Math.cos(r) * 24, y2: y + Math.sin(r) * 24, c: '#a0a0a0' })
  }
  for (const m of majors) {
    const r = rad(m.a)
    ticks.push({ x1: x + Math.cos(r) * 21, y1: y + Math.sin(r) * 21, x2: x + Math.cos(r) * 27, y2: y + Math.sin(r) * 27, c: m.off ? '#b0b0b0' : '#222' })
  }
  return { x, y, c, ticks, labels }
}

const knobs = [
  makeKnob(596, 691, '30В', [{ a: -135 }, { a: -70 }, { a: -28 }, { a: 25 }, { a: 68 }, { a: 135 }], [
    { t: '0.1В', x: 568, y: 708 },
    { t: '1В', x: 567, y: 682 },
    { t: '10В', x: 581, y: 665 },
    { t: '100В', x: 613, y: 662 },
    { t: '200В', x: 631, y: 679 },
    { t: '500В', x: 625, y: 708 },
  ]),
  makeKnob(701, 691, '100К', [{ a: -135 }, { a: -55 }, { a: 0 }, { a: 50 }, { a: 85, off: true }, { a: 135, off: true }], [
    { t: '100К', x: 673, y: 670 },
    { t: '250К', x: 705, y: 660 },
    { t: '333К', x: 727, y: 670 },
    { t: '500К', x: 737, y: 682, off: true },
    { t: '1М', x: 729, y: 707, off: true },
    { t: '1К', x: 675, y: 708 },
  ]),
]
</script>

<style scoped>
.app {
  width: 1366px;
  height: 768px;
  display: flex;
  flex-direction: column;
  background: #d4d0c8;
  font-family: "Noto Sans", "Liberation Sans", sans-serif;
  font-size: 10.4px;
  color: #000;
  overflow: hidden;
}

.title-bar {
  height: 21px;
  flex: none;
  display: flex;
  align-items: center;
  padding-left: 2px;
  background: linear-gradient(90deg, #0a246a, #a6caf0);
}
.app-icon { width: 18px; height: 18px; }
.title-text {
  margin-left: 4px;
  color: #fff;
  font-family: "DejaVu Sans", sans-serif;
  font-weight: 700;
  font-size: 11.4px;
}
.win-btns { margin-left: auto; margin-right: 3px; display: flex; gap: 1px; }
.win-btn {
  width: 19px;
  height: 15px;
  padding: 0;
  background: #d4d0c8;
  border: 1px solid;
  border-color: #fff #404040 #404040 #fff;
}
.win-btn + .win-btn { margin-left: 1px; }
.win-btn svg { display: block; width: 16px; height: 13px; }

.menu-row {
  height: 25px;
  flex: none;
  display: flex;
  align-items: center;
  padding-right: 17px;
}
.menu-bar { display: flex; gap: 9px; padding-left: 5px; flex: 1; margin-top: 2px; }
.order-label { color: #0a1a80; margin-right: 5px; letter-spacing: -0.08px; }
.combo {
  position: relative;
  height: 19px;
  background: #fff;
  border: 1px solid;
  border-color: #808080 #e8e8e8 #e8e8e8 #808080;
  box-sizing: border-box;
  padding-left: 2px;
  line-height: 17px;
}
.order-combo { width: 97px; }
.spin { width: 34px; margin-left: 5px; font-size: 13px; padding-left: 6px; }
.arr {
  display: inline-block;
  border: 4px solid transparent;
  border-top: 4px solid #000;
  border-bottom: 0;
}
.arr.off { border-top-color: #8a8a8a; }
.combo .arr { position: absolute; right: 5px; top: 7px; }
.spin-arrows { position: absolute; right: 3px; top: 2px; display: flex; flex-direction: column; gap: 3px; }
.spin-arrows .up {
  display: block;
  border: 4px solid transparent;
  border-bottom: 4px solid #000;
  border-top: 0;
}
.spin-arrows .arr { position: static; display: block; }

.tabs {
  height: 23px;
  flex: none;
  display: flex;
  gap: 2px;
  align-items: flex-end;
  padding-left: 1px;
  background: linear-gradient(#d4d0c8 22px, #808080 22px);
}
.tab {
  box-sizing: border-box;
  height: 20px;
  border: 1px solid;
  border-color: #fff #808080 #808080 #fff;
  border-radius: 3px 3px 0 0;
  text-align: center;
  font-size: 13px;
  line-height: 18px;
  letter-spacing: 0.3px;
  margin-bottom: 1px;
  white-space: nowrap;
  color: #111;
}
.tab.active {
  height: 23px;
  margin-bottom: 0;
  margin-right: -1px;
  border-bottom: 0;
  background: #d4d0c8;
  line-height: 20px;
  padding-bottom: 2px;
}

.toolbar {
  height: 27px;
  flex: none;
  box-sizing: border-box;
  display: flex;
  align-items: stretch;
  padding: 1px 12px 2px 1px;
  border-bottom: 1px solid #f4f4f0;
}
.tb-btn { display: flex; align-items: center; justify-content: center; flex: none; box-sizing: border-box; }
.tb-btn.pressed, .tool.pressed, .sync-cell.pressed {
  background: repeating-conic-gradient(#fff 0 25%, #d4d0c8 0 50%) 0 0 / 2px 2px;
}
.tb-sep {
  flex: none;
  box-sizing: border-box;
  display: flex;
  justify-content: center;
  position: relative;
}
.tb-sep::after {
  content: "";
  width: 2px;
  background: linear-gradient(90deg, #808080 50%, #fff 50%);
}
.test-select {
  width: 207px;
  box-sizing: border-box;
  display: flex;
  align-items: center;
  padding-left: 51px;
  font-size: 11px;
  flex: none;
}
.test-select span { margin-left: 2px; color: #111; }
.test-select .arr { margin-left: auto; margin-right: 8px; }
.rpm { margin-left: auto; display: flex; align-items: baseline; color: #0a1a7a; }
.rpm b { font-family: "Liberation Sans", sans-serif; font-size: 23px; line-height: 24px; }
.rpm span { margin-left: 3px; color: #222; }

.scope {
  position: relative;
  width: 1366px;
  height: 517px;
  flex: none;
  background: #000;
}
.plot { display: block; font-family: "Liberation Sans", sans-serif; }
.axis-text { font-size: 11px; fill: #cfcfcf; }
.axis-x { font-size: 11px; fill: #c8dcc8; letter-spacing: 0.4px; }
.band-letter { font-size: 16px; font-weight: 700; fill: #fff; }
.ch-name { font-size: 14.5px; letter-spacing: 0.1px; }
.ruler-text { font-size: 12px; fill: #111; }
.marker-no { font-size: 8px; font-weight: 700; fill: #fff; }

.readout {
  position: absolute;
  left: 102px;
  top: 102px;
  width: 274px;
  height: 26px;
  display: flex;
  background: #ccffcc;
  font-family: "Liberation Sans", sans-serif;
  font-size: 20px;
  line-height: 26px;
}
.ro-flag { width: 20px; flex: none; display: block; }
.ro-flag svg { display: block; }
.ro-flag.red { background: #ffc8c8; }
.ro-flag.yellow { background: #ffffcc; }
.ro-flag.gray { background: #c8c8c8; width: 21px; }
.ro-val { padding-left: 1px; width: 68px; flex: none; }
.ro-val.red { color: #e01818; }
.ro-val.yellow { color: #f4f400; }
.ro-val.last { padding-left: 3px; }

.val-label {
  position: absolute;
  box-sizing: border-box;
  background: #fff;
  color: #e01030;
  font-family: "Liberation Sans", sans-serif;
  font-size: 12px;
  text-align: center;
  white-space: nowrap;
  display: flex;
  align-items: center;
  justify-content: center;
}
.val-label.shadow { box-shadow: 1px 1px 0 #000; }

.ctx-menu {
  position: absolute;
  left: 296px;
  top: 333px;
  width: 355px;
  height: 84px;
  box-sizing: border-box;
  margin: 0;
  padding: 1px 2px;
  list-style: none;
  background: #d4d0c8;
  border: 1px solid;
  border-color: #d4d0c8 #404040 #404040 #d4d0c8;
  box-shadow: inset 1px 1px #fff, inset -1px -1px #808080;
  font-size: 12px;
  letter-spacing: 0.05px;
}
.ctx-menu li {
  position: relative;
  height: 20px;
  line-height: 20px;
  padding-left: 18px;
  white-space: nowrap;
}
.ctx-menu li.sel { background: #0a246a; color: #fff; }
.sub-arr {
  position: absolute;
  right: 7px;
  top: 6px;
  border: 4px solid transparent;
  border-left: 4px solid currentColor;
  border-right: 0;
}
.ctx-menu.sub {
  left: 648px;
  top: 354px;
  width: 234px;
  height: 63px;
}
.ctx-menu.sub li { padding-left: 17px; }
.sub-n { display: inline-block; width: 15px; }

.nav-row {
  height: 17px;
  flex: none;
  display: flex;
  align-items: stretch;
  padding-left: 1px;
  border-top: 2px solid;
  border-image: linear-gradient(90deg, #50d050 50%, #e06060 50%) 1;
  margin-top: -2px;
  position: relative;
}
.rnd-btn, .nav-btn {
  padding: 0;
  flex: none;
  background: #d4d0c8;
  border: 1px solid;
  border-color: #fff #404040 #404040 #fff;
  display: flex;
  align-items: center;
  justify-content: center;
  gap: 1px;
}
.rnd-btn { width: 17px; }
.rnd {
  width: 13px;
  height: 13px;
  box-sizing: border-box;
  border: 1px solid #000;
  border-radius: 50%;
  background: #e8e4dc;
  font: 700 11px/10px "Liberation Sans", sans-serif;
  color: #0a1a80;
  display: block;
}
.plus-red { color: #c01010; }
.plus-green { color: #109010; }
.nav-combo {
  position: relative;
  flex: none;
  background: #fff;
  font-family: "Liberation Sans", sans-serif;
  font-size: 12px;
  line-height: 17px;
  padding-left: 2px;
  box-sizing: border-box;
}
.nav-combo .arr { position: absolute; right: 5px; top: 7px; }
.w68 { width: 68px; }
.w64 { width: 64px; }
.w18 { width: 18px; }
.w19 { width: 19px; }
.w22 { width: 22px; }
.w25 { width: 25px; }
.w24 { width: 24px; }
.w28 { width: 28px; }
.w29 { width: 29px; }
.w33 { width: 33px; }
.tri-l, .tri-r { display: block; border: 4px solid transparent; }
.tri-l { border-right: 6px solid #000; border-left: 0; }
.tri-r { border-left: 6px solid #000; border-right: 0; }
.tri-r.green { border-left-color: #108010; border-left-width: 8px; border-top-width: 5px; border-bottom-width: 5px; }
.tri-r.blue { border-left-color: #1010e0; border-left-width: 8px; border-top-width: 5px; border-bottom-width: 5px; }
.bar { width: 2px; height: 8px; background: #000; display: block; }
.track {
  width: 943px;
  flex: none;
  background: repeating-conic-gradient(#fff 0 25%, #d4d0c8 0 50%) 0 0 / 2px 2px;
  padding-left: 23px;
  box-sizing: border-box;
}
.thumb {
  display: block;
  width: 18px;
  height: 100%;
  box-sizing: border-box;
  background: #d4d0c8;
  border: 1px solid;
  border-color: #fff #404040 #404040 #fff;
}
.page-no { width: 58px; flex: none; text-align: center; font-size: 12px; line-height: 17px; }

.slider-row { height: 7px; flex: none; display: flex; padding-left: 410px; }
.slider {
  width: 546px;
  height: 7px;
  box-sizing: border-box;
  border: 1px solid #808080;
  border-top: 1px dotted #333;
  background: #d4d0c8;
  display: flex;
  justify-content: space-between;
  padding: 0 6px;
}
.s-mark { border: 3px solid transparent; border-top: 4px solid #1430a0; border-bottom: 0; }

.controls {
  flex: 1;
  display: flex;
  padding: 8px 0 0 343px;
  min-height: 0;
}
.group {
  position: relative;
  height: 73px;
  box-sizing: border-box;
  border: 1px solid #9a9a94;
  border-radius: 5px;
  box-shadow: inset 1px 1px #f0f0ec, 1px 1px #f0f0ec;
  flex: none;
}
.g-title {
  position: absolute;
  left: 6px;
  top: -7px;
  padding: 0 1px;
  background: #d4d0c8;
  font-family: "Liberation Sans", sans-serif;
  font-weight: 700;
  font-size: 12px;
  line-height: 13px;
  color: #0a1a7a;
}
.g-title.off { color: #9a9a94; }
.g-channels { width: 304px; display: flex; }
.g-left { width: 214px; flex: none; margin-top: -5px; padding-left: 4px; box-sizing: border-box; }
.ch-btns { display: flex; gap: 2px; }
.ch-btn {
  height: 17px;
  box-sizing: border-box;
  border: 1px solid #14406a;
  border-radius: 2px;
  text-align: center;
  font-size: 14px;
  line-height: 15px;
  flex: none;
}
.c-green { background: linear-gradient(#50e850, #10c010); color: #05600a; }
.c-gray { background: linear-gradient(#dcdcdc, #a8a8a8); color: #909090; border-color: #5a7a90; }
.c-red { background: linear-gradient(#f83030, #d80808); color: #500; font-weight: 700; }
.c-blue { background: linear-gradient(#4a80f8, #1a48e0); color: #081a70; }
.ch-input-row { display: flex; align-items: center; margin: 8px 0 0 2px; gap: 4px; height: 21px; }
.ch-input {
  position: relative;
  width: 177px;
  height: 21px;
  flex: none;
  box-sizing: border-box;
  border: 1px solid #d81818;
  background: #fff;
  padding-left: 2px;
  font-size: 11px;
  line-height: 19px;
}
.dots-btn {
  position: absolute;
  right: 1px;
  top: 1px;
  width: 17px;
  height: 17px;
  box-sizing: border-box;
  background: #d4d0c8;
  border: 1px solid;
  border-color: #fff #404040 #404040 #fff;
  font-weight: 700;
  line-height: 10px;
  text-align: center;
  font-size: 11px;
}
.ch-tools { display: flex; margin: 1px 0 0 3px; align-items: center; height: 24px; }
.tool { display: flex; align-items: center; justify-content: center; height: 23px; box-sizing: border-box; flex: none; }
.tool.pressed { border: 1px solid; border-color: #808080 #fff #fff #808080; }
.fx { font: italic 700 15px "Liberation Serif", serif; }
.fx sub { font-size: 9px; }
.knob-svg { display: block; flex: none; }
.knob-c { font-family: "Liberation Sans", sans-serif; font-size: 14px; fill: #111; }
.knob-l { font-family: "Liberation Sans", sans-serif; font-size: 10px; }

.g-freq { width: 105px; margin-left: 4px; }
.g-sync { width: 125px; margin-left: 4px; }
.sync-grid {
  display: grid;
  grid-template-columns: repeat(4, 28px);
  grid-template-rows: 24px 24px;
  row-gap: 5px;
  padding: 11px 0 0 7px;
}
.sync-cell { display: flex; align-items: center; justify-content: center; }
.sync-cell.pressed { margin: 0 2px; }
.sync-combo {
  grid-column: span 2;
  width: 47px;
  height: 22px;
  margin-left: 1px;
  box-sizing: border-box;
  border: 1px solid #9a9a94;
  font-size: 14px;
  line-height: 20px;
  padding-left: 5px;
  color: #666;
  position: relative;
}
.sync-combo .arr { position: absolute; right: 6px; top: 8px; }
.g-run { width: 133px; margin-left: 6px; padding: 10px 3px 0 2px; }
.run-top { display: flex; gap: 3px; }
.run-btn {
  width: 40px;
  height: 28px;
  padding: 0;
  background: #d4d0c8;
  border: 1px solid #a0a0a0;
  border-radius: 2px;
  display: flex;
  align-items: center;
  justify-content: center;
}
.run-btn.navy { border: 1px solid #14406a; box-shadow: inset 1px 1px #fff; }
.run-btn.red-b { border: 1px solid #d01818; background: #f4f4f0; }
.run-bottom { display: flex; align-items: center; margin-top: 2px; }
.start-btn {
  width: 83px;
  height: 28px;
  padding: 0 0 0 9px;
  background: #d4d0c8;
  border: 1px solid #14406a;
  border-radius: 2px;
  box-shadow: inset 1px 1px #fff;
  display: flex;
  align-items: center;
  font-family: "Noto Sans", sans-serif;
  font-size: 12px;
}
.start-btn b { margin-left: 15px; letter-spacing: 0.4px; }
.ver {
  margin: 10px 0 0 17px;
  color: #0e6e0e;
  font-family: "Liberation Sans", sans-serif;
  font-weight: 700;
  font-size: 13px;
  letter-spacing: 0.5px;
}

.status-bar {
  height: 20px;
  flex: none;
  box-sizing: border-box;
  display: flex;
  gap: 3px;
  padding: 2px 0 0 1px;
  border-top: 1px solid #808080;
  border-bottom: 1px solid #fff;
}
.st-panel {
  box-sizing: border-box;
  height: 16px;
  border: 1px solid;
  border-color: #808080 #fff #fff #808080;
  line-height: 14px;
  white-space: pre;
  padding-left: 3px;
  flex: none;
}
.st-usb { width: 188px; }
.st-msg { width: 1124px; }
.st-ver { width: 48px; }
.st-yellow { background: #ffff00; display: inline-block; width: 297px; height: 14px; padding-left: 1px; box-sizing: border-box; letter-spacing: 0.2px; }

.taskbar {
  height: 29px;
  flex: none;
  box-sizing: border-box;
  display: flex;
  align-items: center;
  padding: 2px 3px 0 2px;
  border-top: 1px solid #404040;
}
.start {
  width: 55px;
  height: 23px;
  padding: 0 0 0 2px;
  display: flex;
  align-items: center;
  gap: 1px;
  background: #d4d0c8;
  border: 1px solid;
  border-color: #fff #404040 #404040 #fff;
  font-family: "Liberation Sans", sans-serif;
  font-weight: 700;
  font-size: 13px;
}
.tk-ic { display: block; height: 18px; flex: none; }
.tk-ic svg, .tk-btn svg { display: block; }
.tk-btn {
  height: 23px;
  flex: none;
  box-sizing: border-box;
  display: flex;
  align-items: center;
  justify-content: center;
  margin-left: 10px;
  border: 1px solid;
  border-color: #fff #404040 #404040 #fff;
}
.tk-active {
  margin-left: 4px;
  border-color: #404040 #fff #fff #404040;
  background: repeating-conic-gradient(#fff 0 25%, #d4d0c8 0 50%) 0 0 / 2px 2px;
}
.tk-sep { width: 2px; height: 23px; background: #808080; margin-left: 1px; flex: none; }
.tk-lang { margin-left: auto; font-size: 12px; color: #222; }
.tk-div { width: 2px; height: 24px; background: linear-gradient(90deg, #808080 50%, #fff 50%); margin: 0 4px 0 6px; flex: none; }
.tray {
  width: 172px;
  height: 24px;
  box-sizing: border-box;
  flex: none;
  display: flex;
  align-items: center;
  border: 1px solid;
  border-color: #808080 #fff #fff #808080;
  padding-left: 5px;
  gap: 6px;
}
.tray-up { transform: rotate(-90deg); font-size: 11px; width: 10px; text-align: center; margin-right: 2px; }
.tray-sig { margin-left: 3px; }
.clock { font-size: 12.5px; margin-left: 14px; letter-spacing: 0.3px; }
.desk { width: 16px; height: 13px; background: linear-gradient(135deg, #4a90e0, #1a58b0); border: 1px solid #9ab; margin-left: 3px; box-sizing: border-box; }
</style>

<style>
body { margin: 0; background: #d4d0c8; overflow: hidden; }
</style>
